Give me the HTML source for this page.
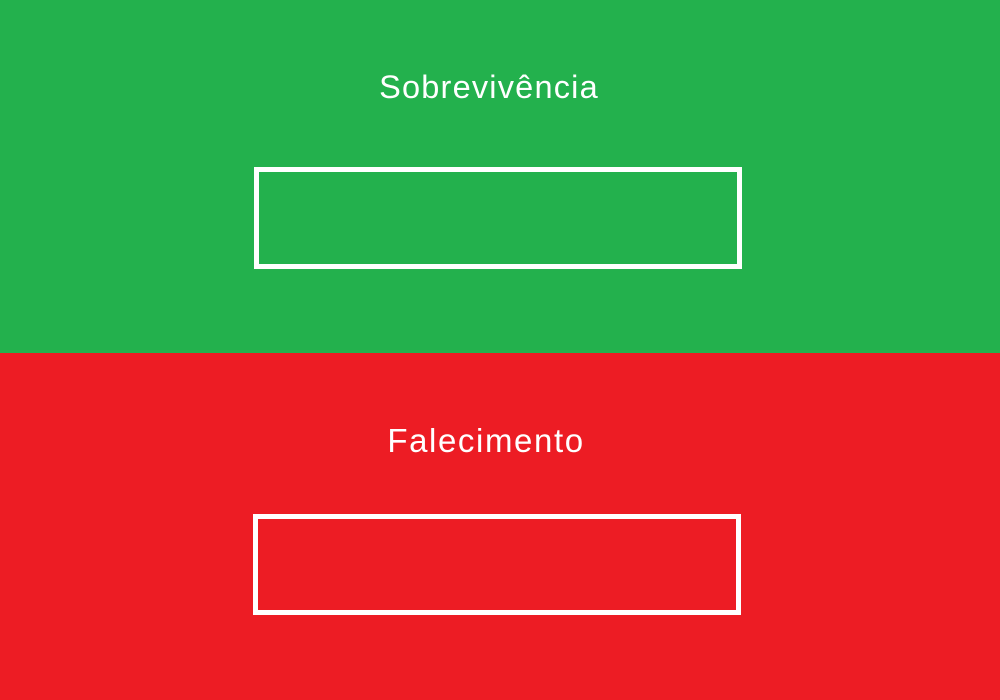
<!DOCTYPE html>
<html><head><style>
html,body{margin:0;padding:0;width:1000px;height:700px;overflow:hidden;font-family:"Liberation Sans",sans-serif}
.s{position:absolute;left:0;width:1000px}
.g{top:0;height:353px;background:#23B14D}
.r{top:353px;height:347px;background:#ED1C24}
.t{position:absolute;left:0;width:978px;text-align:center;color:#fff;font-size:33px;letter-spacing:1.6px;line-height:1}
.b{position:absolute;border:5px solid #fff;box-sizing:border-box}
</style></head><body>
<div class="s g"></div>
<div class="s r"></div>
<div class="t" style="top:71px;letter-spacing:1.2px;font-size:32.5px">Sobrevivência</div>
<div class="b" style="left:254px;top:167px;width:488px;height:102px"></div>
<div class="t" style="top:424px;width:972px">Falecimento</div>
<div class="b" style="left:253px;top:514px;width:488px;height:101px"></div>
</body></html>
